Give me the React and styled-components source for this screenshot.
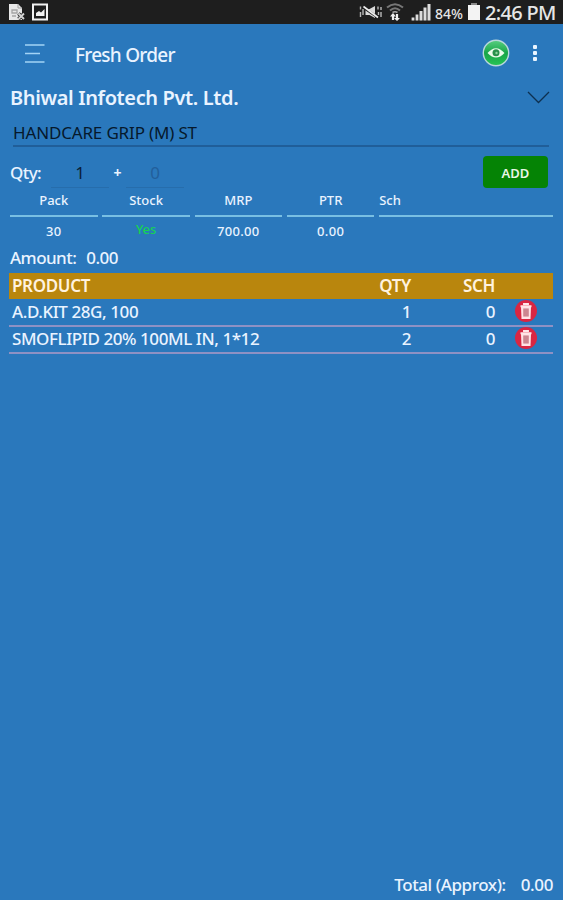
import React from 'react'
import styled, { createGlobalStyle } from 'styled-components'

const GlobalStyle = createGlobalStyle`
    * {
        box-sizing: border-box;
    }
    body {
        margin: 0;
        background: #2a78bc;
        font-family: "Noto Sans", "Open Sans", sans-serif;
    }
`
const Screen = styled.div`
    width: 563px;
    height: 900px;
    display: flex;
    flex-direction: column;
    background: #2a78bc;
    color: #e9f3ff;
    overflow: hidden;
    white-space: nowrap;
`
const StatusBar = styled.div`
    height: 24px;
    padding: 0 6px 0 8px;
    display: flex;
    align-items: center;
    background: #1e1e1e;
    color: #e6e6e6;

    svg {
        display: block;
        flex: none;
    }
`
const StatusIcons = styled.div`
    display: flex;
    gap: 5px;
    margin-right: auto;
`
const Network = styled.div`
    display: flex;
    align-items: center;

    svg:nth-child(2) {
        margin: 0 7px 0 3px;
    }
`
const Battery = styled.span`
    width: 30px;
    margin: 2px 3px 0 4px;
    font-size: 14px;
    font-weight: 500;
`
const Clock = styled.span`
    width: 72px;
    margin-left: 5px;
    font-size: 20px;
    font-weight: 500;
    letter-spacing: -0.7px;
`
const AppBar = styled.header`
    height: 59px;
    padding: 0 26px 1px 25px;
    display: flex;
    align-items: center;
`
const Title = styled.h1`
    margin: 3px auto 0 30px;
    font-size: 19px;
    font-weight: 500;
    letter-spacing: -0.75px;
`
const Dots = styled.div`
    display: flex;
    flex-direction: column;
    gap: 2px;
    margin-left: 23px;

    span {
        width: 4px;
        height: 4px;
        border-radius: 1px;
        background: #eaf5ff;
    }
`
const Company = styled.div`
    height: 33px;
    padding: 0 13px 4px 10px;
    display: flex;
    align-items: center;
    justify-content: space-between;
    font-size: 20px;
    font-weight: 600;
    letter-spacing: -0.37px;
`
const ProductField = styled.div`
    height: 31px;
    margin: 0 14px 0 13px;
    padding-top: 5px;
    border-bottom: 2px solid #205e99;
    color: #06192c;
    font-size: 17px;
    line-height: 24px;
    letter-spacing: -0.16px;
`
const QtyRow = styled.div`
    height: 44px;
    padding: 9px 15px 0 10px;
    display: flex;
    align-items: flex-start;
    font-size: 17px;
    line-height: 34px;
`
const QtyLabel = styled.span`
    width: 41px;
    font-weight: 500;
    letter-spacing: -0.6px;
`
const QtyInput = styled.span`
    width: 58px;
    height: 32px;
    border-bottom: 1px solid #266dac;
    color: ${props => props.$hint ? '#225f9b' : '#0a2038'};
    text-align: center;
`
const Plus = styled.span`
    width: 17px;
    font-size: 14px;
    font-weight: 700;
    text-align: center;
`
const AddButton = styled.button`
    width: 65px;
    height: 32px;
    margin-left: auto;
    padding: 2px 0 0;
    border: 0;
    border-radius: 4px;
    background: #058305;
    color: #e9f6e5;
    font-family: inherit;
    font-size: 13px;
    font-weight: 600;
`
const Details = styled.div`
    height: 55px;
    padding: 0 10px;
    display: grid;
    grid-template-columns: 87.5px 87.5px 87.5px 87.5px 1fr;
    column-gap: 4.8px;
    font-size: 13px;
    font-weight: 500;
    text-align: center;
`
const DetailName = styled.div`
    height: 26px;
    border-bottom: 2px solid #78bfe3;
    line-height: 19px;
    text-align: ${props => props.$left ? 'left' : 'center'};
`
const DetailValue = styled.div`
    padding-top: ${props => props.$stock ? '2px' : '4px'};
    color: ${props => props.$stock ? '#16d255' : 'inherit'};
    line-height: 20px;
    letter-spacing: ${props => props.$stock ? '0' : '0.3px'};
`
const Amount = styled.div`
    height: 27px;
    padding-left: 10px;
    display: flex;
    gap: 10px;
    font-size: 17px;
    font-weight: 500;
    line-height: 23px;
    letter-spacing: -0.55px;
`
const Table = styled.div`
    margin: 0 10px 0 9px;
    font-size: 17px;
    font-weight: 500;
`
const Row = styled.div`
    height: 27px;
    padding: 0 0 1px 3px;
    display: grid;
    grid-template-columns: 1fr 70px 84px 58px;
    align-items: center;
    border-bottom: 2px solid #8e91c4;
    line-height: 24px;
    letter-spacing: -0.42px;
`
const HeadRow = styled(Row)`
    height: 26px;
    margin-bottom: 1px;
    padding-bottom: 0;
    border-bottom: 0;
    background: #b9860d;
    color: #fff2df;
    font-weight: 600;
    letter-spacing: -0.35px;
`
const Cell = styled.span`
    text-align: ${props => props.$right ? 'right' : 'left'};
`
const DeleteButton = styled.span`
    width: 22px;
    height: 22px;
    margin: -2px 0 0 20px;
    border-radius: 50%;
    background: #d92642;
    display: flex;
    align-items: center;
    justify-content: center;
`
const Total = styled.footer`
    margin-top: auto;
    padding: 0 10px 3px 0;
    display: flex;
    justify-content: flex-end;
    gap: 15px;
    font-size: 17px;
    font-weight: 500;
    line-height: 24px;
    letter-spacing: -0.4px;
`

const details = [
    { name: 'Pack', value: '30' },
    { name: 'Stock', value: 'Yes', stock: true },
    { name: 'MRP', value: '700.00' },
    { name: 'PTR', value: '0.00' },
    { name: 'Sch', value: '', left: true },
]

const products = [
    { name: 'A.D.KIT 28G, 100', qty: 1, sch: 0 },
    { name: 'SMOFLIPID 20% 100ML IN, 1*12', qty: 2, sch: 0 },
]

function FileIcon() {
    return (
        <svg width="18" height="18" viewBox="0 0 18 18">
            <path d="M1 1h9l4 4v12H1z" fill="#e8e8e8" />
            <path d="M10 1v4h4" fill="none" stroke="#a0a0a0" />
            <path d="M4 7h5v3H4zM4 13h4" fill="none" stroke="#a5a5a5" strokeWidth="1.3" />
            <path d="M10.5 10.500l5.500 5.500M16 10.500l-5.500 5.500" stroke="#1e1e1e" strokeWidth="3.500" />
            <path d="M10.500 10.500l5.500 5.500M16 10.500l-5.500 5.500" stroke="#d5d5d5" strokeWidth="1.900" />
        </svg>
    )
}

function ImageIcon() {
    return (
        <svg width="17" height="18" viewBox="0 0 17 18">
            <rect x="2" y="1.500" width="14" height="15" fill="none" stroke="#f2f2f2" strokeWidth="2" />
            <path d="M5 13V10l3-2 2 1.500L13.500 6v7z" fill="#f2f2f2" />
        </svg>
    )
}

function MuteIcon() {
    return (
        <svg width="24" height="16" viewBox="0 0 24 16">
            <path d="M6.500 5h4L16 2v12l-5.500-3H6.500z" fill="#d9d9d9" />
            <path d="M5 4l14 9.500" stroke="#1e1e1e" strokeWidth="2.500" />
            <path d="M4.500 2.500L19 13.500" stroke="#eee" strokeWidth="1.700" />
            <path d="M1.500 2.500v3M1.500 8v5M4 5v6M19 2.500v3M19.500 8v3M22 3v3M22 8v5" stroke="#b8b8b8" strokeWidth="1.400" />
        </svg>
    )
}

function WifiIcon() {
    return (
        <svg width="18" height="20" viewBox="0 0 18 20">
            <path d="M1 5.500Q9-1 17 5.500M4 8.500Q9 4 14 8.500" fill="none" stroke="#777" strokeWidth="2" />
            <path d="M6.500 10.500Q9 9 11.500 10.500" fill="none" stroke="#aaa" strokeWidth="1.500" />
            <path d="M7 12v6M11 18v-6" stroke="#eee" strokeWidth="2.200" />
            <path d="M4 14.500L7 11l3 3.500M8 16l3 3 3-3" fill="#eee" />
        </svg>
    )
}

function SignalIcon() {
    return (
        <svg width="20" height="18" viewBox="0 0 20 18">
            <path d="M2 17.500v-3M6 17.500v-6" stroke="#ddd" strokeWidth="2.800" />
            <path d="M10 17.500V8M14 17.500V4.500M18 17.500V1" stroke="#ddd" strokeWidth="3" />
        </svg>
    )
}

function BatteryIcon() {
    return (
        <svg width="12" height="18" viewBox="0 0 12 18">
            <path d="M3 0h6v2H3z" fill="#8a8a8a" />
            <path d="M0 2h12v15H0z" fill="#f3f3f3" />
        </svg>
    )
}

function MenuIcon() {
    return (
        <svg width="20" height="20" viewBox="0 0 20 20">
            <path d="M0 2h19.500M0 10.500h15M0 19h19.500" stroke="#a3d3f5" strokeWidth="1.700" />
        </svg>
    )
}

function EyeIcon() {
    return (
        <svg width="28" height="28" viewBox="0 0 28 28">
            <defs>
                <linearGradient id="eyeGreen" x1="0" y1="0" x2="0" y2="1">
                    <stop offset="0" stopColor="#58cf80" />
                    <stop offset="0.5" stopColor="#18a548" />
                    <stop offset="1" stopColor="#27c455" />
                </linearGradient>
            </defs>
            <circle cx="14" cy="14" r="12.700" fill="url(#eyeGreen)" stroke="#b9d7dc" strokeWidth="1.400" />
            <path d="M5.500 14Q14 4.500 22.500 14 14 23 5.500 14z" fill="#eafbea" />
            <circle cx="14" cy="13.800" r="3.500" fill="#27904a" />
            <circle cx="14.500" cy="14" r="1.200" fill="#8cd39b" />
        </svg>
    )
}

function ChevronIcon() {
    return (
        <svg width="23" height="13" viewBox="0 0 23 13">
            <path d="M1 1l10.500 10.500L22 1" fill="none" stroke="#0d3050" strokeWidth="1.300" />
        </svg>
    )
}

function TrashIcon() {
    return (
        <svg width="14" height="17" viewBox="0 0 14 17">
            <path d="M5 2V1h4v1M1.500 3.300h11" fill="none" stroke="#ffe6e7" strokeWidth="1.900" />
            <path d="M2 4h10l-.5 12h-9z" fill="#ffe3e5" />
            <path d="M4.500 5.500h5v8h-5z" fill="#dda0a8" />
            <path d="M5 5.500v8M7 5.500v8M9 5.500v8" stroke="#b96873" strokeWidth="0.900" />
        </svg>
    )
}

export default function App() {
    return (
        <>
            <GlobalStyle />
            <Screen>
                <StatusBar>
                    <StatusIcons>
                        <FileIcon />
                        <ImageIcon />
                    </StatusIcons>
                    <Network>
                        <MuteIcon />
                        <WifiIcon />
                        <SignalIcon />
                    </Network>
                    <Battery>84%</Battery>
                    <BatteryIcon />
                    <Clock>2:46 PM</Clock>
                </StatusBar>
                <AppBar>
                    <MenuIcon />
                    <Title>Fresh Order</Title>
                    <EyeIcon />
                    <Dots><span /><span /><span /></Dots>
                </AppBar>
                <Company>
                    Bhiwal Infotech Pvt. Ltd.
                    <ChevronIcon />
                </Company>
                <ProductField>HANDCARE GRIP (M) ST</ProductField>
                <QtyRow>
                    <QtyLabel>Qty:</QtyLabel>
                    <QtyInput>1</QtyInput>
                    <Plus>+</Plus>
                    <QtyInput $hint>0</QtyInput>
                    <AddButton>ADD</AddButton>
                </QtyRow>
                <Details>
                    {details.map(item =>
                        <div key={item.name}>
                            <DetailName $left={item.left}>{item.name}</DetailName>
                            <DetailValue $stock={item.stock}>{item.value}</DetailValue>
                        </div>
                    )}
                </Details>
                <Amount><span>Amount:</span><span>0.00</span></Amount>
                <Table>
                    <HeadRow>
                        <Cell>PRODUCT</Cell>
                        <Cell $right>QTY</Cell>
                        <Cell $right>SCH</Cell>
                    </HeadRow>
                    {products.map(product =>
                        <Row key={product.name}>
                            <Cell>{product.name}</Cell>
                            <Cell $right>{product.qty}</Cell>
                            <Cell $right>{product.sch}</Cell>
                            <DeleteButton><TrashIcon /></DeleteButton>
                        </Row>
                    )}
                </Table>
                <Total><span>Total (Approx):</span><span>0.00</span></Total>
            </Screen>
        </>
    )
}
